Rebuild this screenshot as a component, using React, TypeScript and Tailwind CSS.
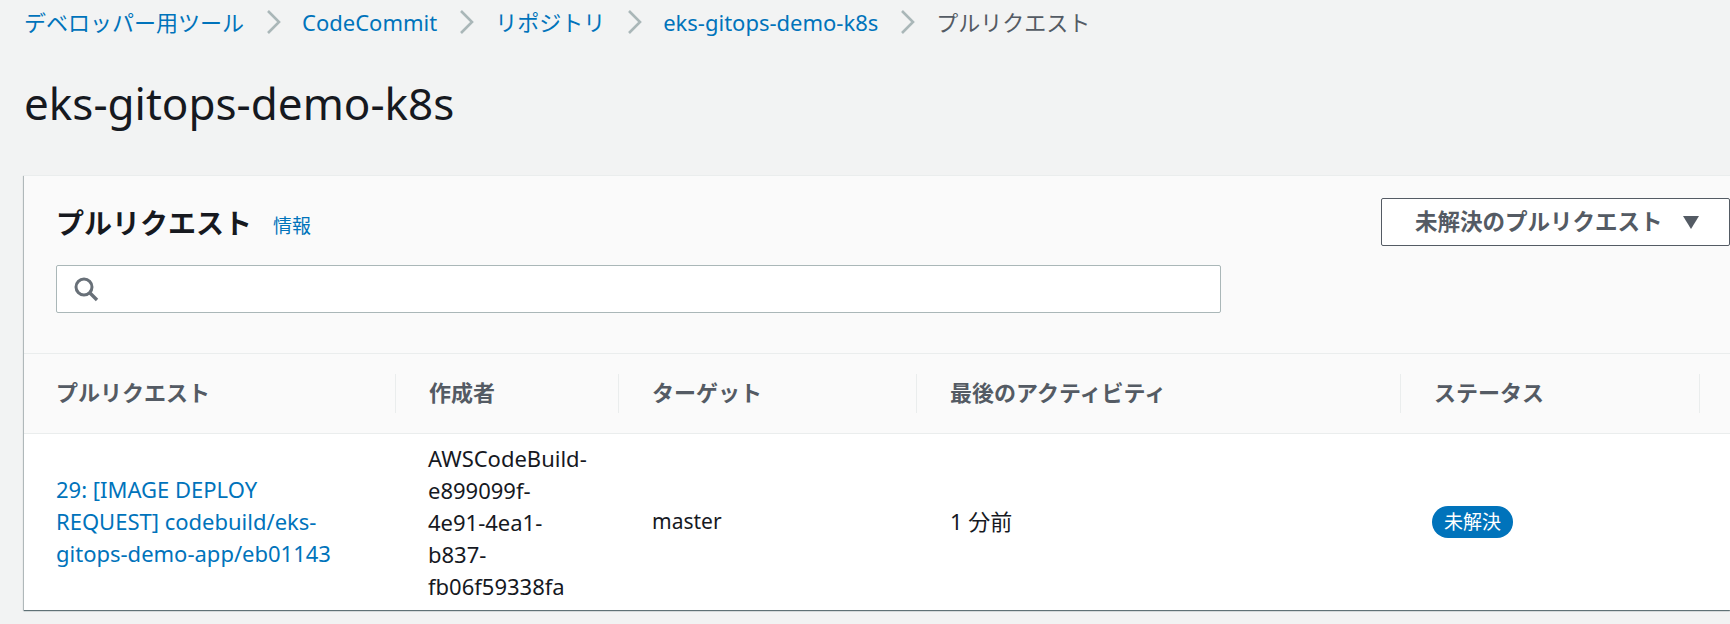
import React from 'react';

const FONT = "font-['Noto_Sans','Noto_Sans_CJK_JP',sans-serif]";

const Chevron = () => (
  <svg width="15" height="24" viewBox="0 0 15 24" fill="none" className="shrink-0">
    <polyline points="2,1 13,12 2,23" stroke="#aab7b8" strokeWidth="2.6" />
  </svg>
);

const Crumb = ({ label }: { label: string }) => (
  <>
    <a className="text-[#0073bb] text-[22px] leading-[32px] whitespace-nowrap">{label}</a>
    <Chevron />
  </>
);

const columns = [
  { label: 'プルリクエスト', width: 'w-[372px] pl-8' },
  { label: '作成者', width: 'w-[223px] pl-[33px]' },
  { label: 'ターゲット', width: 'w-[298px] pl-[33px]' },
  { label: '最後のアクティビティ', width: 'w-[484px] pl-[33px]' },
  { label: 'ステータス', width: 'w-[299px] pl-[33px]' },
];

export default function App() {
  return (
    <div className={`${FONT} h-[624px] w-[1730px] overflow-hidden bg-[#f2f3f3] pl-6 text-[#16191f]`}>
      <nav className="flex h-[43px] items-center gap-[21.5px]">
        <Crumb label="デベロッパー用ツール" />
        <Crumb label="CodeCommit" />
        <Crumb label="リポジトリ" />
        <Crumb label="eks-gitops-demo-k8s" />
        <span className="text-[#545b64] text-[22px] leading-[32px] whitespace-nowrap">プルリクエスト</span>
      </nav>

      <h1 className="mt-[30px] h-[102px] text-[44px] leading-[60px] font-normal">eks-gitops-demo-k8s</h1>

      <section className="bg-white border-t border-[#eaeded] shadow-[0_1px_1px_0_rgba(0,28,36,0.5),-1px_1px_1px_0_rgba(0,28,36,0.2)]">
        <div className="relative h-[178px] bg-[#fafafa] border-b border-[#eaeded] pl-8">
          <div className="flex h-[89px] items-center pt-[4px]">
            <h2 className="text-[28px] leading-[40px] font-bold">プルリクエスト</h2>
            <a className="ml-[21px] mt-[8px] text-[#0073bb] text-[19px]">情報</a>
          </div>
          <div className="flex h-[48px] w-[1165px] items-center rounded-[2px] border border-[#aab7b8] bg-white pl-4">
            <svg width="26" height="26" viewBox="0 0 26 26" fill="none">
              <circle cx="11" cy="11" r="8" stroke="#687078" strokeWidth="3" />
              <line x1="16.5" y1="16.5" x2="24" y2="24" stroke="#687078" strokeWidth="3.4" />
            </svg>
          </div>
          <button className="absolute right-0 top-[22px] flex h-[48px] w-[349px] items-center rounded-[2px] border border-[#545b64] bg-white pl-[33px] text-[22.5px] font-bold text-[#545b64]">
            未解決のプルリクエスト
            <svg width="18" height="14" viewBox="0 0 18 14" className="ml-[19px]">
              <polygon points="1,1 17,1 9,14" fill="#545b64" />
            </svg>
          </button>
        </div>

        <div className="flex h-[80px] items-center bg-[#fafafa] border-b border-[#eaeded]">
          {columns.map((col) => (
            <div key={col.label} className={`${col.width} flex h-[39px] items-center border-r border-[#eaeded] pb-[3px] text-[22px] font-bold text-[#545b64]`}>
              {col.label}
            </div>
          ))}
        </div>

        <div className="flex h-[176px] items-center text-[22px] leading-[32px]">
          <div className="w-[372px] pl-8 pb-[2px] text-[#0073bb]">
            29: [IMAGE DEPLOY
            <br />
            REQUEST] codebuild/eks-
            <br />
            gitops-demo-app/eb01143
          </div>
          <div className="w-[223px] pl-[32px]">
            AWSCodeBuild-
            <br />
            e899099f-
            <br />
            4e91-4ea1-
            <br />
            b837-
            <br />
            fb06f59338fa
          </div>
          <div className="w-[298px] pl-[33px] pb-[2px] text-[21px]">master</div>
          <div className="w-[484px] pl-[33px] pb-[2px]">1 分前</div>
          <div className="pl-[31px]">
            <span className="flex h-[32px] w-[81px] items-center justify-center rounded-full bg-[#0073bb] text-[19px] text-white">未解決</span>
          </div>
        </div>
      </section>
    </div>
  );
}
